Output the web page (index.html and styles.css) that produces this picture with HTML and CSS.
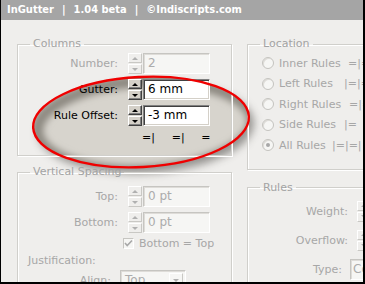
FILE: index.html
```html
<!DOCTYPE html>
<html>
<head>
<meta charset="utf-8">
<link rel="stylesheet" href="styles.css">
</head>
<body>
<div class="frame">
  <div class="titlebar">InGutter<span class="sep">|</span>1.04 beta<span class="sep">|</span>©Indiscripts.com</div>

  <svg class="ell ell-under" viewBox="0 0 365 284" width="365" height="284">
    <defs>
      <filter id="blurShadow" x="-20%" y="-20%" width="140%" height="140%"><feGaussianBlur stdDeviation="4"/></filter>
      <filter id="blurInner" x="-20%" y="-20%" width="140%" height="140%"><feGaussianBlur stdDeviation="3.5"/></filter>
      <clipPath id="ellClip"><ellipse cx="141" cy="122" rx="108" ry="45" transform="rotate(-3 141 122)"/></clipPath>
    </defs>
    <ellipse cx="146" cy="128" rx="108" ry="45" transform="rotate(-3 146 128)" fill="#4a4742" opacity="0.55" filter="url(#blurShadow)"/>
    <ellipse cx="141" cy="122" rx="108" ry="45" transform="rotate(-3 141 122)" fill="#d7d4cd"/>
    <g clip-path="url(#ellClip)">
      <ellipse cx="145" cy="126" rx="108" ry="45" transform="rotate(-3 145 126)" fill="none" stroke="#8c8880" stroke-width="12" filter="url(#blurInner)"/>
    </g>
  </svg>

  <div class="main">
    <div class="col col-left">
      <fieldset class="group g-columns">
        <legend>Columns</legend>
        <div class="row">
          <span class="lbl">Number:</span>
          <span class="spin off"><i class="btn up"></i><i class="btn dn"></i></span>
          <span class="field off">2</span>
        </div>
        <div class="row">
          <span class="lbl on">Gutter:</span>
          <span class="spin"><i class="btn up"></i><i class="btn dn"></i></span>
          <span class="field">6 mm</span>
        </div>
        <div class="row">
          <span class="lbl on">Rule Offset:</span>
          <span class="spin"><i class="btn up"></i><i class="btn dn"></i></span>
          <span class="field">-3 mm</span>
        </div>
        <div class="marks"><span>=|</span><span>=|</span><span>=</span></div>
      </fieldset>

      <fieldset class="group g-vspace">
        <legend>Vertical Spacing</legend>
        <div class="row">
          <span class="lbl">Top:</span>
          <span class="spin off"><i class="btn up"></i><i class="btn dn"></i></span>
          <span class="field off">0 pt</span>
        </div>
        <div class="row">
          <span class="lbl">Bottom:</span>
          <span class="spin off"><i class="btn up"></i><i class="btn dn"></i></span>
          <span class="field off">0 pt</span>
        </div>
        <div class="check-row">
          <span class="check"><svg width="9" height="9" viewBox="0 0 9 9"><path d="M1 4 L3.2 6.5 L8 1.5" fill="none" stroke="#a8a8a8" stroke-width="1.6"/></svg></span>
          <span class="dim">Bottom = Top</span>
        </div>
        <div class="just dim">Justification:</div>
        <div class="row align-row">
          <span class="lbl short">Align:</span>
          <span class="select"><span class="val">Top</span><span class="sel-btn"><i></i></span></span>
        </div>
      </fieldset>
    </div>

    <div class="col col-right">
      <fieldset class="group g-location">
        <legend>Location</legend>
        <div class="radio-row"><span class="radio"></span><span class="rlabel">Inner Rules</span><span class="mk mk-inner">=|=|</span></div>
        <div class="radio-row"><span class="radio"></span><span class="rlabel">Left Rules</span><span class="mk">|=|=|</span></div>
        <div class="radio-row"><span class="radio"></span><span class="rlabel">Right Rules</span><span class="mk mk-right">=|=|</span></div>
        <div class="radio-row"><span class="radio"></span><span class="rlabel">Side Rules</span><span class="mk">|=&nbsp;&nbsp;=|</span></div>
        <div class="radio-row"><span class="radio checked"></span><span class="rlabel">All Rules</span><span class="mk mk-all">|=|=|</span></div>
      </fieldset>

      <fieldset class="group g-rules">
        <legend>Rules</legend>
        <div class="row">
          <span class="lbl">Weight:</span>
          <span class="spin off"><i class="btn up"></i><i class="btn dn"></i></span>
        </div>
        <div class="row">
          <span class="lbl">Overflow:</span>
          <span class="spin off"><i class="btn up"></i><i class="btn dn"></i></span>
        </div>
        <div class="row">
          <span class="lbl type">Type:</span>
          <span class="field off type-field">Color</span>
        </div>
      </fieldset>
    </div>
  </div>

  <svg class="ell ell-over" viewBox="0 0 365 284" width="365" height="284">
    <ellipse cx="141" cy="122" rx="108" ry="45" transform="rotate(-3 141 122)" fill="none" stroke="#f00000" stroke-width="2.4"/>
  </svg>
</div>
</body>
</html>
```

FILE: styles.css
```css
* { box-sizing: border-box; }
html, body { margin: 0; padding: 0; }
body {
  width: 365px;
  height: 284px;
  overflow: hidden;
  background: #ffffff;
  font-family: "DejaVu Sans", Verdana, sans-serif;
  font-size: 11px;
  color: #a7a7a7;
}
.frame {
  position: relative;
  width: 365px;
  height: 284px;
  overflow: hidden;
  background: #efeeec;
  border-left: 1px solid #000;
  border-right: 2px solid #000;
  border-bottom: 2px solid #000;
}
.titlebar {
  height: 20px;
  background: #a5a5a5;
  color: #fff;
  font-family: "DejaVu Sans Condensed", "DejaVu Sans", sans-serif;
  font-weight: bold;
  font-size: 11px;
  line-height: 20px;
  padding-left: 6px;
  white-space: nowrap;
}
.sep { padding: 0 8px; }

.ell { position: absolute; left: -1px; top: 0; }
.ell-under { z-index: 0; }
.ell-over { z-index: 2; pointer-events: none; }

.main {
  position: relative;
  z-index: 1;
  display: flex;
  gap: 15px;
  padding-left: 16px;
}
.col { flex: none; }
.col-left { width: 215px; }
.col-right { width: 140px; }

.group {
  margin: 0;
  padding: 0;
  min-width: 0;
  border: 1px solid #d0cfcb;
  box-shadow: inset 1px 1px 0 #fff, 1px 1px 0 #fff;
}
.group legend {
  margin-left: 12px;
  padding: 0 3px;
  color: #a3a3a3;
  font-size: 11px;
  line-height: 14px;
}
.g-columns { margin-top: 17px; padding: 2px 0 10px; }
.g-vspace { margin-top: 9px; padding: 7px 0 20px; }
.g-location { margin-top: 17px; padding: 2px 0 13px; }
.g-rules { margin-top: 11px; padding: 6px 0 20px; }

.row {
  display: flex;
  align-items: center;
  height: 21px;
}
.row + .row { margin-top: 5px; }
.g-rules .row + .row { margin-top: 8px; }

.lbl {
  flex: none;
  width: 100px;
  text-align: right;
  color: #a7a7a7;
}
.lbl.on { color: #000; }
.lbl.short { width: 93px; }
.lbl.type { width: 94px; }

.spin {
  flex: none;
  display: flex;
  flex-direction: column;
  gap: 1px;
  width: 14px;
  height: 21px;
  margin-left: 10px;
}
.g-rules .spin { margin-left: 9px; }
.btn {
  flex: 1;
  display: flex;
  align-items: center;
  justify-content: center;
  background: #d4d0c8;
  border: 1px solid;
  border-color: #fff #404040 #404040 #fff;
  box-shadow: inset -1px -1px 0 #808080;
}
.btn.up::after {
  content: "";
  border-left: 3px solid transparent;
  border-right: 3px solid transparent;
  border-bottom: 3px solid #000;
}
.btn.dn::after {
  content: "";
  border-left: 3px solid transparent;
  border-right: 3px solid transparent;
  border-top: 3px solid #000;
}
.spin.off .btn {
  background: #efeeec;
  border-color: #fff #c9c8c4 #c9c8c4 #fff;
  box-shadow: none;
}
.spin.off .btn.up::after { border-bottom-color: #b0b0b0; }
.spin.off .btn.dn::after { border-top-color: #b0b0b0; }

.field {
  flex: none;
  width: 67px;
  height: 21px;
  margin-left: 1px;
  padding-left: 4px;
  background: #fff;
  color: #000;
  font-size: 12px;
  line-height: 19px;
  border: 1px solid;
  border-color: #808080 #fff #fff #808080;
  box-shadow: inset 1px 1px 0 #404040, inset -1px -1px 0 #d4d0c8;
  white-space: nowrap;
  overflow: hidden;
}
.field.off {
  background: #f6f6f4;
  color: #acacac;
  border-color: #c6c5c1 #fff #fff #c6c5c1;
  box-shadow: inset 1px 1px 0 #dedcd8;
}
.g-rules .type-field { margin-left: 8px; padding-left: 2px; }

.marks {
  display: flex;
  height: 14px;
  line-height: 14px;
  margin-top: 5px;
  padding-left: 124px;
  color: #000;
}
.marks span { width: 30px; }

.dim { color: #a7a7a7; }
.check-row {
  display: flex;
  align-items: center;
  height: 15px;
  margin-top: 3px;
  padding-left: 105px;
}
.check {
  flex: none;
  width: 11px;
  height: 11px;
  margin-right: 5px;
  display: flex;
  align-items: center;
  justify-content: center;
  background: #f6f6f4;
  border: 1px solid;
  border-color: #c6c5c1 #fff #fff #c6c5c1;
}
.just {
  height: 14px;
  line-height: 14px;
  margin-top: 3px;
  padding-left: 10px;
}
.row.align-row { margin-top: 2px; }
.select {
  flex: none;
  display: flex;
  width: 66px;
  height: 21px;
  margin-left: 9px;
  background: #f6f6f4;
  border: 1px solid;
  border-color: #c6c5c1 #fff #fff #c6c5c1;
  box-shadow: inset 1px 1px 0 #dedcd8;
}
.select .val {
  flex: 1;
  padding-left: 4px;
  color: #acacac;
  font-size: 12px;
  line-height: 19px;
}
.sel-btn {
  flex: none;
  width: 14px;
  margin: 2px 2px 2px 0;
  display: flex;
  align-items: center;
  justify-content: center;
  border: 1px solid;
  border-color: #fff #c9c8c4 #c9c8c4 #fff;
}
.sel-btn i {
  border-left: 3px solid transparent;
  border-right: 3px solid transparent;
  border-top: 3px solid #b0b0b0;
}

.radio-row {
  display: flex;
  align-items: center;
  height: 20.5px;
  padding-left: 14px;
  white-space: nowrap;
}
.radio {
  flex: none;
  width: 12px;
  height: 12px;
  border-radius: 50%;
  background: #f6f6f4;
  border: 1px solid #c4c3bf;
  box-shadow: inset 1px 1px 0 #dedcd8;
  display: flex;
  align-items: center;
  justify-content: center;
}
.radio.checked::after {
  content: "";
  width: 4px;
  height: 4px;
  border-radius: 50%;
  background: #a8a8a8;
}
.rlabel {
  flex: none;
  width: 65px;
  margin-left: 5px;
  color: #a7a7a7;
}
.mk { color: #a7a7a7; }
.mk-inner { padding-left: 4px; }
.mk-right { padding-left: 5px; }
.mk-all { margin-left: -12px; }
```
